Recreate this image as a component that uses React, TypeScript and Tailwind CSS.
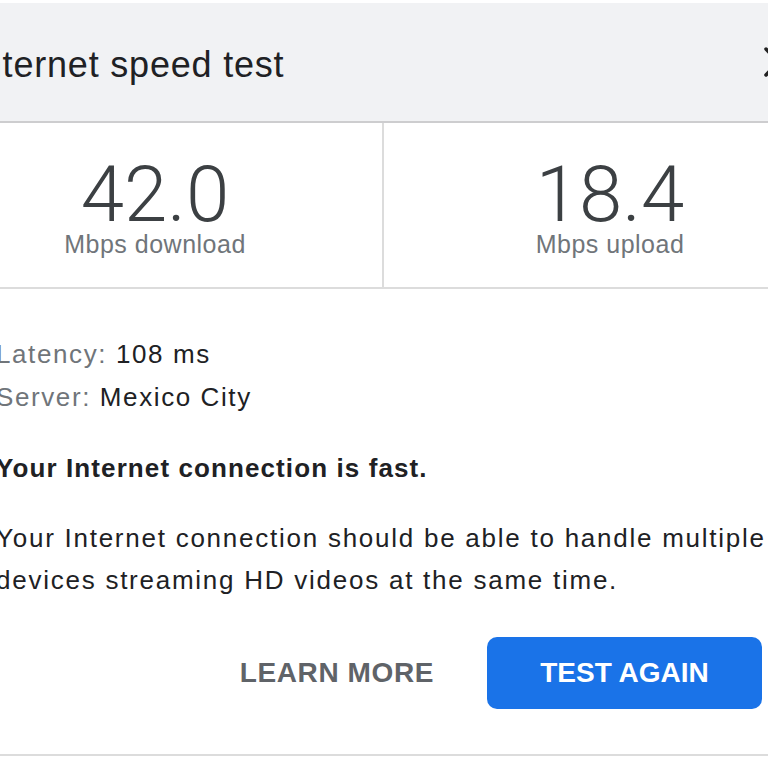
import React from "react";

export default function App() {
  const sans = { fontFamily: '"Liberation Sans", Arial, sans-serif' };
  const light = { fontFamily: 'Roboto, "Liberation Sans", sans-serif' };
  return (
    <div className="w-[768px] h-[768px] overflow-hidden bg-white" style={sans}>
      <div className="ml-[-72px] w-[940px] pt-[3px]">
        {/* Header */}
        <div className="h-[120px] bg-[#f1f2f4] border-b-2 border-[#cdcdcf] flex items-center pl-[43px] pr-[76px]">
          <div className="text-[36px] leading-none tracking-[0.8px] text-[#202124] pt-[6px]">Internet speed test</div>
          <svg className="ml-auto" width="28" height="30" viewBox="0 0 28 30">
            <path d="M2 2 L26 28 M26 2 L2 28" stroke="#222" strokeWidth="3.5" strokeLinecap="round" />
          </svg>
        </div>

        {/* Stats */}
        <div className="grid grid-cols-[456px_452px] h-[166px] border-b-2 border-[#dcdcdc]">
          <div className="flex flex-col items-center justify-center border-r-2 border-[#dcdcdc] pt-[6px]">
            <div className="text-[78px] leading-[72px] text-[#3c4043] font-light" style={light}>42.0</div>
            <div className="text-[25px] leading-[26px] tracking-[0.5px] text-[#70757a]">Mbps download</div>
          </div>
          <div className="flex flex-col items-center justify-center pt-[6px]">
            <div className="text-[78px] leading-[72px] text-[#3c4043] font-light" style={light}>18.4</div>
            <div className="text-[25px] leading-[26px] tracking-[0.5px] text-[#70757a]">Mbps upload</div>
          </div>
        </div>

        {/* Body */}
        <div className="pl-[68px] pt-[44px] text-[26px] tracking-[1.6px] text-[#202124]">
          <div className="leading-[43px]">
            <span className="text-[#70757a]">Latency:</span> 108 ms
          </div>
          <div className="leading-[43px]">
            <span className="text-[#70757a]">Server:</span> Mexico City
          </div>
          <div className="leading-[41px] mt-[29px] font-bold tracking-[1.1px]">Your Internet connection is fast.</div>
          <div className="leading-[42px] mt-[28px] w-[800px] tracking-[1.75px]">
            Your Internet connection should be able to handle multiple devices streaming HD videos at the same time.
          </div>
        </div>

        {/* Buttons */}
        <div className="flex items-center justify-end pr-[106px] mt-[36px] pb-[45px] border-b-2 border-[#dcdcdc] w-[940px]">
          <div className="text-[28px] font-bold tracking-[0.6px] text-[#5f6368] mr-[53px]">LEARN MORE</div>
          <div className="w-[275px] h-[72px] rounded-[10px] bg-[#1a73e8] flex items-center justify-center text-[28px] font-bold text-white">
            TEST AGAIN
          </div>
        </div>
      </div>
    </div>
  );
}
